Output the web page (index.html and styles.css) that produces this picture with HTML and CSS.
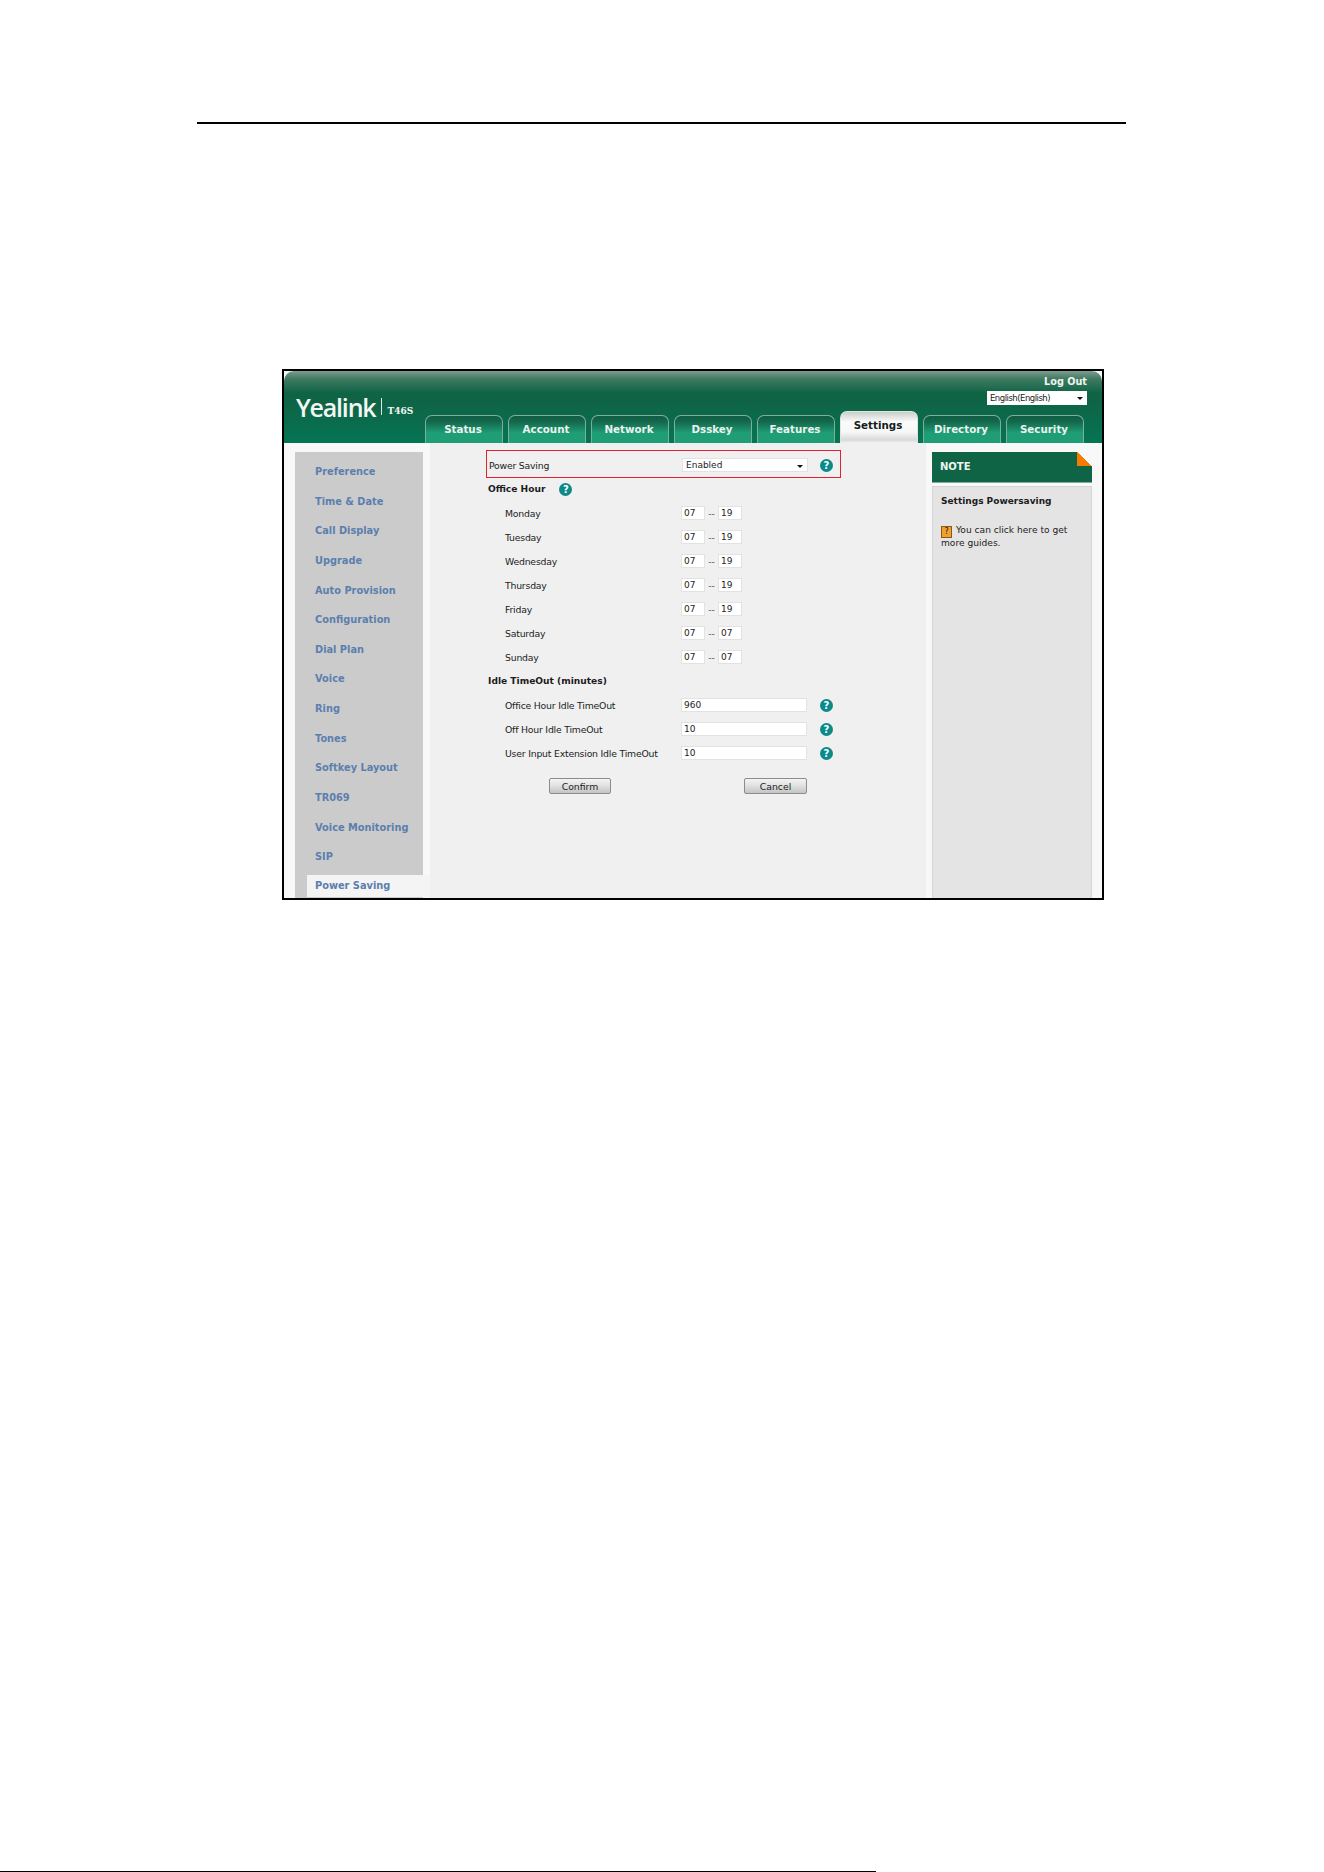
FILE: index.html
```
<!DOCTYPE html>
<html>
	<head>
		<meta charset="utf-8" />
		<title>Power Saving</title>
		<link rel="stylesheet" href="styles.css">
	</head>
	<body>
		<div class="top-rule"></div>
		<div class="shot">
			<div class="head">
				<div class="head-top">
					<a class="logout">Log Out</a>
					<div class="lang">English(English)<span class="arrow"></span></div>
				</div>
				<div class="head-bottom">
					<div class="logo"><span class="logo-name">Yealink</span><span class="logo-model">T46S</span></div>
					<div class="tabs">
						<a class="tab">Status</a>
						<a class="tab">Account</a>
						<a class="tab">Network</a>
						<a class="tab">Dsskey</a>
						<a class="tab">Features</a>
						<a class="tab active">Settings</a>
						<a class="tab">Directory</a>
						<a class="tab">Security</a>
					</div>
				</div>
			</div>
			<div class="main">
				<div class="side">
					<a>Preference</a>
					<a>Time &amp; Date</a>
					<a>Call Display</a>
					<a>Upgrade</a>
					<a>Auto Provision</a>
					<a>Configuration</a>
					<a>Dial Plan</a>
					<a>Voice</a>
					<a>Ring</a>
					<a>Tones</a>
					<a>Softkey Layout</a>
					<a>TR069</a>
					<a>Voice Monitoring</a>
					<a>SIP</a>
					<a class="current">Power Saving</a>
				</div>
				<div class="content">
					<div class="row highlight">
						<span class="label top">Power Saving</span>
						<div class="select">Enabled<span class="arrow"></span></div>
						<span class="help">?</span>
					</div>
					<div class="row heading">Office Hour <span class="help">?</span></div>
					<div class="row"><span class="label">Monday</span><span class="small">07</span><span class="dash">--</span><span class="small">19</span></div>
					<div class="row"><span class="label">Tuesday</span><span class="small">07</span><span class="dash">--</span><span class="small">19</span></div>
					<div class="row"><span class="label">Wednesday</span><span class="small">07</span><span class="dash">--</span><span class="small">19</span></div>
					<div class="row"><span class="label">Thursday</span><span class="small">07</span><span class="dash">--</span><span class="small">19</span></div>
					<div class="row"><span class="label">Friday</span><span class="small">07</span><span class="dash">--</span><span class="small">19</span></div>
					<div class="row"><span class="label">Saturday</span><span class="small">07</span><span class="dash">--</span><span class="small">07</span></div>
					<div class="row"><span class="label">Sunday</span><span class="small">07</span><span class="dash">--</span><span class="small">07</span></div>
					<div class="row heading">Idle TimeOut (minutes)</div>
					<div class="row"><span class="label">Office Hour Idle TimeOut</span><span class="wide">960</span><span class="help">?</span></div>
					<div class="row"><span class="label">Off Hour Idle TimeOut</span><span class="wide">10</span><span class="help">?</span></div>
					<div class="row"><span class="label">User Input Extension Idle TimeOut</span><span class="wide">10</span><span class="help">?</span></div>
					<div class="buttons">
						<button class="btn">Confirm</button>
						<button class="btn">Cancel</button>
					</div>
				</div>
				<div class="note">
					<div class="note-head">NOTE</div>
					<div class="note-body">
						<p class="note-title">Settings Powersaving</p>
						<p class="note-text"><span class="book">?</span>You can click here to get more guides.</p>
					</div>
				</div>
			</div>
		</div>
		<div class="bottom-rule"></div>
	</body>
</html>
```

FILE: styles.css
```
html, body {
	margin: 0;
	padding: 0;
	background: #fff;
}
body {
	width: 1324px;
	height: 1872px;
	overflow: hidden;
	font-family: "DejaVu Sans", Tahoma, sans-serif;
	font-size: 9.3px;
	color: #1c1c1c;
}
a { display: block; }
.top-rule {
	height: 2px;
	width: 929px;
	margin: 122px 0 0 197px;
	background: #000;
}
.bottom-rule {
	height: 1px;
	width: 876px;
	margin-top: 971px;
	background: #000;
}
.shot {
	box-sizing: border-box;
	width: 822px;
	height: 531px;
	margin: 245px 0 0 282px;
	border: 2px solid #000;
	overflow: hidden;
	background: #f8f8f8;
}

/* Header */
.head {
	height: 72px;
	border-radius: 10px 10px 0 0;
	background: linear-gradient(#7e9c8e 0, #3f7a62 8px, #0f6446 22px, #0f6446 32px, #047554 72px);
	display: flex;
	flex-direction: column;
}
.head-top {
	height: 40px;
	padding: 4px 15px 0 0;
	box-sizing: border-box;
	display: flex;
	flex-direction: column;
	align-items: flex-end;
}
.logout {
	font-weight: bold;
	color: #eef5f0;
	font-size: 9.7px;
	line-height: 13px;
}
.lang {
	position: relative;
	box-sizing: border-box;
	width: 100px;
	height: 14px;
	margin-top: 3px;
	padding-left: 3px;
	background: #fff;
	font-size: 8.5px;
	line-height: 14px;
	letter-spacing: -0.5px;
	color: #222;
}
.arrow {
	position: absolute;
	right: 4px;
	top: 6px;
	border: 3px solid transparent;
	border-top: 3px solid #111;
	border-bottom: 0;
}
.head-bottom {
	flex: 1;
	display: flex;
	align-items: flex-end;
}
.logo {
	width: 141px;
	height: 32px;
	padding-left: 12px;
	box-sizing: border-box;
	display: flex;
	align-items: flex-start;
	color: #f2f7f4;
}
.logo-name {
	font-family: "Open Sans", sans-serif;
	font-weight: 600;
	font-size: 25px;
	line-height: 24px;
	letter-spacing: -1.2px;
	margin-top: -16px;
	padding-right: 6px;
	height: 24px;
}
.logo-model {
	box-sizing: border-box;
	font-family: "DejaVu Serif", serif;
	font-weight: bold;
	font-size: 9px;
	line-height: 8px;
	margin-top: -13px;
	padding: 9px 0 0 5px;
	height: 17px;
	border-left: 1px solid #dfeae5;
}
.tabs {
	display: flex;
	gap: 5px;
	align-items: flex-end;
}
.tab {
	box-sizing: border-box;
	width: 78px;
	height: 28px;
	padding-right: 2px;
	border: 1px solid #7fae9c;
	border-bottom: 0;
	border-radius: 7px 7px 0 0;
	background: linear-gradient(#0f5c42 0, #14694d 6px, #1f9e75 17px, #1f9e75 28px);
	color: #eaf3ef;
	font-family: "DejaVu Sans", sans-serif;
	font-weight: bold;
	font-size: 10.3px;
	line-height: 26px;
	text-align: center;
}
.tab.active {
	height: 32px;
	border: 1px solid #dfe6e2;
	border-bottom: 0;
	background: linear-gradient(#c9cecb 0, #fbfbfb 10px, #f7f7f7 20px, #d8dad8 28px, #fafafa 32px);
	color: #14201c;
	line-height: 27px;
}

/* Body */
.main {
	height: 455px;
	padding-top: 9px;
	box-sizing: border-box;
	display: flex;
}
.side {
	box-sizing: border-box;
	width: 128px;
	height: 460px;
	margin-left: 11px;
	padding-top: 5px;
	background: #cbcbcb;
	display: flex;
	flex-direction: column;
}
.side a {
	flex: none;
	height: 29.65px;
	line-height: 29.65px;
	padding-left: 20px;
	color: #5b7fae;
	font-weight: bold;
	font-size: 9.8px;
	white-space: nowrap;
}
.side a.current {
	position: relative;
	height: 22px;
	line-height: 22px;
	margin: 3px -7px 0 12px;
	padding-left: 8px;
	background: #f4f4f4;
}
.content {
	box-sizing: border-box;
	width: 496px;
	height: 460px;
	margin: -9px 0 0 7px;
	padding-top: 7px;
	background: #f0f0f0;
}
.row {
	height: 24px;
	padding-left: 75px;
	display: flex;
	align-items: center;
}
.label {
	width: 176px;
	flex: none;
	white-space: nowrap;
	letter-spacing: -0.2px;
}
.label.top { width: 193px; }
.heading {
	padding-left: 58px;
	font-weight: bold;
	font-size: 9.1px;
}
.heading .help { margin-left: 14px; }
.highlight {
	box-sizing: border-box;
	width: 355px;
	height: 28px;
	margin: 0 0 -1px 56px;
	padding: 2px 0 0 2px;
	border: 1.5px solid #e3202e;
}
.highlight .help { margin-left: 12px; }
.select, .wide, .small {
	box-sizing: border-box;
	height: 14px;
	line-height: 13px;
	background: #fff;
	border: 1px solid #e2e2e2;
	padding-left: 2px;
	font-size: 9px;
}
.select {
	position: relative;
	width: 126px;
	padding-left: 3px;
}
.wide { width: 126px; }
.small { width: 24px; }
.dash {
	width: 13px;
	text-align: center;
	color: #555;
}
.help {
	box-sizing: border-box;
	width: 13px;
	height: 13px;
	margin-left: 13px;
	border-radius: 50%;
	background: #0b8a8a;
	color: #fff;
	font-weight: bold;
	font-size: 10px;
	line-height: 13px;
	text-align: center;
}
.buttons {
	width: 258px;
	margin: 13px 0 0 119px;
	display: flex;
	justify-content: space-between;
}
.btn {
	box-sizing: border-box;
	width: 62px;
	height: 16px;
	padding: 0;
	border: 1px solid #8c8c8c;
	border-radius: 2px;
	background: linear-gradient(#f4f4f4, #e2e2e2 45%, #c4c4c4);
	font-family: "DejaVu Sans", sans-serif;
	font-size: 9.3px;
	color: #222;
}
.btn + .btn { width: 63px; }
.note {
	width: 160px;
	margin-left: 6px;
}
.note-head {
	position: relative;
	box-sizing: border-box;
	height: 31px;
	padding-left: 8px;
	background: #0f6446;
	border-bottom: 1px solid #7fae9c;
	color: #eef5f0;
	font-weight: bold;
	font-size: 10px;
	line-height: 30px;
}
.note-head::after {
	content: "";
	position: absolute;
	top: 0;
	right: 0;
	width: 15px;
	height: 14px;
	background: linear-gradient(to top right, #f57c00 50%, #f8f8f8 50%);
}
.note-body {
	box-sizing: border-box;
	height: 440px;
	margin-top: 3px;
	padding: 8px 8px;
	background: #e4e4e4;
	border: 1px solid #d4d4d4;
}
.note-title {
	margin: 0 0 16px;
	font-weight: bold;
	font-size: 9px;
	line-height: 13px;
}
.note-text {
	margin: 0;
	font-size: 9.1px;
	line-height: 13px;
}
.book {
	display: inline-block;
	box-sizing: border-box;
	width: 11px;
	height: 12px;
	margin: -2px 4px -2px 0;
	background: #f0a030;
	border: 1px solid #8a5a10;
	font-size: 8px;
	line-height: 10px;
	text-align: center;
	vertical-align: -1px;
}
```
